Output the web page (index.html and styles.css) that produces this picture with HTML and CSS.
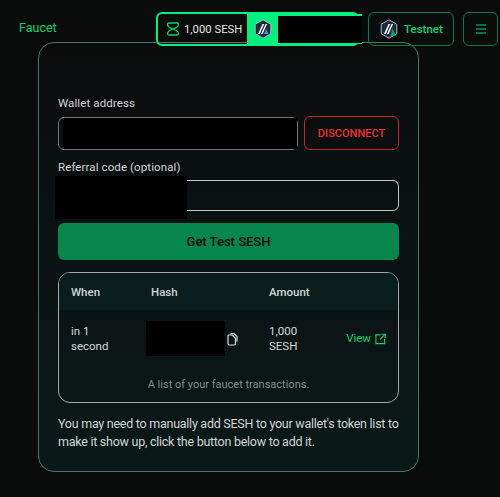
FILE: index.html
```html
<!DOCTYPE html>
<html lang="en">
<head>
    <meta charset="UTF-8">
    <meta name="viewport" content="width=device-width, initial-scale=1.0">
    <title>Faucet</title>
    <link rel="stylesheet" href="styles.css">
</head>
<body>
    <header class="topbar">
        <a class="page-title">Faucet</a>
        <div class="topbar-actions">
            <div class="wallet-pill">
                <div class="balance">
                    <svg class="balance-icon" width="14" height="14" viewBox="0 0 14 14" fill="none" stroke="currentColor" stroke-width="1.3" stroke-linejoin="round">
                        <path d="M3 1h8c1 0 1.500.8 1.500 1.500 0 1.800-2.500 3.400-5.500 4.500C4 5.900 1.500 4.300 1.500 2.500 1.500 1.800 2 1 3 1z"/>
                        <path d="M3 13h8c1 0 1.500-.8 1.500-1.500 0-1.800-2.500-3.400-5.500-4.500-3 1.100-5.500 2.700-5.500 4.500 0 .7.500 1.500 1.500 1.500z"/>
                    </svg>
                    <span>1,000 SESH</span>
                </div>
                <div class="account">
                    <svg width="18" height="20" viewBox="0 0 18 20">
                        <path d="M9 .8l7.800 4.500v9.400L9 19.200l-7.800-4.500V5.300z" fill="#1c2b3d" stroke="#a9b8c8"/>
                        <path d="M4 15L8.500 5h1.700L5.700 15zM7 15l4.500-10h1.600L8.600 15z" fill="#fff"/>
                        <path d="M12.200 10l2.300 5h-4.500z" fill="#28a0f0"/>
                    </svg>
                    <div class="redacted redacted-account"></div>
                </div>
            </div>
            <button class="network-btn">
                <svg width="18" height="20" viewBox="0 0 18 20">
                    <path d="M9 .8l7.800 4.500v9.400L9 19.200l-7.800-4.500V5.300z" fill="#1c2b3d" stroke="#a9b8c8"/>
                    <path d="M4 15L8.500 5h1.700L5.700 15zM7 15l4.500-10h1.600L8.600 15z" fill="#fff"/>
                    <path d="M12.500 9.500l3.500 7.500h-5.500z" fill="#00a86b"/>
                </svg>
                <span>Testnet</span>
            </button>
            <button class="menu-btn">
                <svg width="12" height="10" viewBox="0 0 12 10" stroke="currentColor" stroke-width="1.200">
                    <path d="M1 1h10M1 5h10M1 9h10"/>
                </svg>
            </button>
        </div>
    </header>

    <main class="card">
        <div class="form-group">
            <label class="field-label">Wallet address</label>
            <div class="wallet-row">
                <div class="input input-wallet">
                    <div class="redacted redacted-wallet"></div>
                </div>
                <button class="disconnect-btn">DISCONNECT</button>
            </div>
        </div>

        <div class="form-group referral-group">
            <label class="field-label">Referral code (optional)</label>
            <div class="input input-referral"></div>
            <div class="redacted redacted-referral"></div>
        </div>

        <button class="submit-btn">Get Test SESH</button>

        <div class="table-box">
            <table class="tx-table">
                <thead>
                    <tr>
                        <th class="col-when">When</th>
                        <th class="col-hash">Hash</th>
                        <th class="col-amount">Amount</th>
                        <th></th>
                    </tr>
                </thead>
                <tbody>
                    <tr>
                        <td>in 1 second</td>
                        <td class="hash-cell">
                            <div class="hash-wrap">
                                <div class="redacted redacted-hash"></div>
                                <svg class="copy-icon" width="11" height="14" viewBox="0 0 11 14" fill="none" stroke="currentColor" stroke-width="1.200" stroke-linejoin="round">
                                    <path d="M3.500 3h-1.500a1 1 0 0 0-1 1v7.500a1.500 1.500 0 0 0 1.500 1.500h4.500a1.500 1.500 0 0 0 1.500-1.500v-5l-3-3.500h-2z"/>
                                    <path d="M4 3v-1.500h3l3 3V9.500"/>
                                </svg>
                            </div>
                        </td>
                        <td>1,000 SESH</td>
                        <td class="view-cell">
                            <a class="view-link">View
                                <svg width="11" height="12" viewBox="0 0 12 12" fill="none" stroke="currentColor" stroke-width="1.200">
                                    <path d="M6 1.500H1v9.500h9.500V6M7 .8h4.200V5M11 1L5.500 6.500"/>
                                </svg>
                            </a>
                        </td>
                    </tr>
                </tbody>
            </table>
            <div class="table-caption">A list of your faucet transactions.</div>
        </div>

        <p class="note">You may need to manually add SESH to your wallet's token list to make it show up, click the button below to add it.</p>
    </main>
</body>
</html>
```

FILE: styles.css
```css
* {
    box-sizing: border-box;
}
html, body {
    height: 100%;
}
body {
    margin: 0;
    background-color: #0a0c0c;
    font-family: Roboto, "Liberation Sans", sans-serif;
    color: #d6d8d8;
    overflow: hidden;
}
button {
    font-family: inherit;
    cursor: pointer;
}
.redacted {
    background-color: #000;
}
.topbar {
    position: relative;
    z-index: 1;
    display: flex;
    justify-content: space-between;
    align-items: center;
    height: 34px;
    margin: 12px 2px 0 19px;
}
.page-title {
    color: #00d672;
    font-size: 12.500px;
    margin-top: -4px;
}
.topbar-actions {
    display: flex;
    gap: 9px;
}
.wallet-pill {
    display: flex;
    width: 203px;
    height: 34px;
    border: 2px solid #00f07f;
    border-radius: 6px;
}
.balance {
    flex: none;
    display: flex;
    align-items: center;
    gap: 4px;
    width: 89px;
    padding-left: 8px;
    font-size: 11.300px;
    white-space: nowrap;
    color: #e4e6e6;
}
.balance-icon {
    flex: none;
    color: #00d672;
}
.account {
    flex: 1;
    display: flex;
    align-items: center;
    gap: 6px;
    padding-left: 7px;
    background-color: #00f07f;
}
.redacted-account {
    flex: none;
    width: 84px;
    height: 27px;
}
.network-btn {
    display: flex;
    align-items: center;
    gap: 6px;
    width: 86px;
    height: 34px;
    padding: 0 0 0 11px;
    background: none;
    border: 1px solid #067a4a;
    border-radius: 6px;
    color: #00d672;
    font-size: 11.500px;
    font-weight: 500;
}
.menu-btn {
    display: flex;
    align-items: center;
    justify-content: center;
    width: 35px;
    height: 34px;
    padding: 0;
    background: none;
    border: 1px solid #067a4a;
    border-radius: 6px;
    color: #00d672;
}
.card {
    width: 381px;
    height: 430px;
    margin: -4px 0 0 38px;
    padding: 53px 19px 0;
    border: 1px solid #4d7568;
    border-radius: 16px;
    background: linear-gradient(180deg, #0a0c0c 0%, #0a1918 100%);
}
.form-group {
    margin-bottom: 10px;
}
.field-label {
    display: block;
    height: 14px;
    margin-bottom: 6px;
    font-size: 11.500px;
    line-height: 14px;
    letter-spacing: 0.1px;
    color: #d2d5d5;
}
.wallet-row {
    display: flex;
    gap: 6px;
}
.input {
    height: 32px;
    border: 1px solid #9a9e9e;
    border-radius: 6px;
}
.input-wallet {
    width: 240px;
    height: 33px;
    margin-top: 1px;
    padding-left: 4px;
    border-color: #6f7373;
}
.redacted-wallet {
    width: 234px;
    height: 31px;
}
.disconnect-btn {
    width: 95px;
    height: 34px;
    padding: 0;
    background: none;
    border: 1px solid #c8242c;
    border-radius: 6px;
    color: #f02d33;
    font-size: 11px;
    font-weight: 500;
}
.referral-group {
    position: relative;
    margin-bottom: 12px;
}
.input-referral {
    border-color: #c4c8c8;
    height: 31px;
}
.redacted-referral {
    position: absolute;
    left: -3px;
    top: 16px;
    width: 132px;
    height: 43px;
}
.submit-btn {
    display: block;
    width: 100%;
    height: 37px;
    padding: 0;
    background-color: #06854d;
    border: none;
    border-radius: 6px;
    color: #030d08;
    font-size: 13px;
    font-weight: 500;
}
.table-box {
    height: 131px;
    margin-top: 12px;
    border: 1px solid #a3a8a6;
    border-radius: 12px;
    overflow: hidden;
}
.tx-table {
    width: 100%;
    table-layout: fixed;
    border-collapse: collapse;
    font-size: 11.500px;
}
.tx-table thead {
    background-color: #0a1e1d;
}
.tx-table th {
    height: 37px;
    padding: 0;
    text-align: left;
    font-weight: 500;
    color: #d2d5d5;
}
.col-when {
    width: 92px;
}
.col-hash {
    width: 118px;
}
.col-amount {
    width: 64px;
}
.tx-table td {
    height: 57px;
    padding: 0;
    line-height: 15px;
    color: #d6d9d9;
}
.tx-table th:first-child, .tx-table td:first-child {
    padding-left: 12px;
}
.tx-table td:first-child {
    padding-right: 30px;
}
.tx-table td:nth-child(3) {
    padding-right: 15px;
}
.hash-wrap {
    display: flex;
    align-items: center;
    gap: 2px;
    margin-left: -5px;
}
.redacted-hash {
    width: 79px;
    height: 35px;
}
.copy-icon {
    color: #d6d9d9;
}
.view-cell {
    text-align: right;
    padding-right: 12px !important;
}
.view-link {
    display: inline-flex;
    align-items: center;
    gap: 4px;
    color: #00d672;
}
.table-caption {
    margin-top: 11px;
    text-align: center;
    font-size: 11px;
    line-height: 14px;
    color: #868b8b;
}
.note {
    margin: 12px 0 0;
    font-size: 12.500px;
    letter-spacing: -0.260px;
    line-height: 18px;
    color: #d2d5d5;
}
```
